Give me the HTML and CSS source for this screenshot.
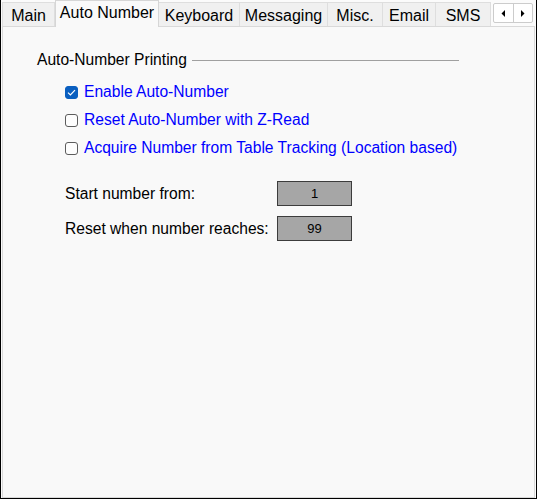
FILE: index.html
```html
<!DOCTYPE html>
<html lang="en">
<head>
    <meta charset="UTF-8">
    <meta name="viewport" content="width=device-width, initial-scale=1.0">
    <title>Auto Number</title>
    <link rel="stylesheet" href="styles.css">
</head>
<body>
    <div class="window">
        <div class="tabstrip">
            <div class="tabs">
                <div class="tab">Main</div>
                <div class="tab active">Auto Number</div>
                <div class="tab">Keyboard</div>
                <div class="tab">Messaging</div>
                <div class="tab">Misc.</div>
                <div class="tab">Email</div>
                <div class="tab">SMS</div>
            </div>
            <div class="scroller">
                <span class="arrow"><svg width="5" height="7" viewBox="0 0 5 7"><path d="M4 0 L4 7 L0.5 3.5 Z" fill="#000"/></svg></span>
                <span class="arrow"><svg width="5" height="7" viewBox="0 0 5 7"><path d="M1 0 L1 7 L4.5 3.5 Z" fill="#000"/></svg></span>
            </div>
        </div>

        <div class="panel">
            <div class="group-title">
                <span>Auto-Number Printing</span>
                <span class="rule"></span>
            </div>

            <div class="options">
                <label class="option">
                    <span class="box checked">
                        <svg width="9" height="7" viewBox="0 0 9 7"><path d="M1 3.6 L3.4 6 L8 1.2" fill="none" stroke="#fff" stroke-width="1.2"/></svg>
                    </span>
                    Enable Auto-Number
                </label>
                <label class="option">
                    <span class="box"></span>
                    Reset Auto-Number with Z-Read
                </label>
                <label class="option">
                    <span class="box"></span>
                    Acquire Number from Table Tracking (Location based)
                </label>
            </div>

            <div class="fields">
                <div class="field">
                    <span class="field-label">Start number from:</span>
                    <span class="num-box">1</span>
                </div>
                <div class="field">
                    <span class="field-label">Reset when number reaches:</span>
                    <span class="num-box">99</span>
                </div>
            </div>
        </div>
    </div>
</body>
</html>
```

FILE: styles.css
```css
body {
    margin: 0;
    font-family: "Liberation Sans", Arial, sans-serif;
    background-color: #ffffff;
}
.window {
    width: 537px;
    height: 499px;
    box-sizing: border-box;
    padding: 0 1px;
    border-left: 1px solid #000;
    border-right: 1px solid #000;
    border-bottom: 1px solid #000;
    background-color: #fbfbfb;
    display: flex;
    flex-direction: column;
}
.tabstrip {
    height: 26px;
    display: flex;
}
.tabs {
    display: grid;
    grid-template-columns: 53px 104px 81px 88px 55px 53px 55px;
    align-items: end;
}
.tab {
    height: 24px;
    box-sizing: border-box;
    border: 1px solid #dedede;
    border-bottom: none;
    border-left: none;
    background-color: #f0f0f0;
    font-size: 16px;
    color: #000;
    text-align: center;
    line-height: 25px;
}
.tab:first-child {
    border-left: 1px solid #dedede;
}
.tab.active {
    height: 27px;
    margin-bottom: -1px;
    position: relative;
    z-index: 1;
    background-color: #f9f9f9;
    border: 1px solid #d6d6d6;
    border-bottom: none;
    line-height: 24px;
}
.scroller {
    margin: 3px 0 0 2px;
    width: 40px;
    height: 20px;
    box-sizing: border-box;
    border: 1px solid #cccccc;
    border-radius: 2px;
    background-color: #ffffff;
    display: flex;
}
.arrow {
    flex: 1;
    display: flex;
    align-items: center;
    justify-content: center;
}
.arrow + .arrow {
    border-left: 1px solid #cccccc;
}
.panel {
    flex: 1;
    border: 1px solid #d9d9d9;
    background-color: #f9f9f9;
    padding: 23px 0 0 34px;
    font-size: 15.6px;
}
.group-title {
    width: 422px;
    height: 20px;
    display: flex;
    align-items: center;
    color: #000;
}
.rule {
    flex: 1;
    height: 1px;
    margin-left: 5px;
    background-color: #a0a0a0;
}
.options {
    margin: 8px 0 0 28px;
}
.option {
    height: 28px;
    display: flex;
    align-items: center;
    color: #0000ff;
}
.box {
    width: 13px;
    height: 13px;
    box-sizing: border-box;
    margin-right: 6px;
    border: 1px solid #5c5c5c;
    border-radius: 3px;
    background-color: #fdfdfd;
    display: flex;
    align-items: center;
    justify-content: center;
}
.box.checked {
    border-color: #0a5fc0;
    background-color: #0a5fc0;
}
.fields {
    margin: 19px 0 0 28px;
    display: flex;
    flex-direction: column;
    gap: 10px;
}
.field {
    display: flex;
    align-items: center;
    color: #000;
}
.field-label {
    width: 212px;
}
.num-box {
    width: 75px;
    height: 25px;
    box-sizing: border-box;
    border: 1px solid #3c3c3c;
    background-color: #a6a6a6;
    font-size: 13px;
    text-align: center;
    line-height: 23px;
    color: #000;
}
```
